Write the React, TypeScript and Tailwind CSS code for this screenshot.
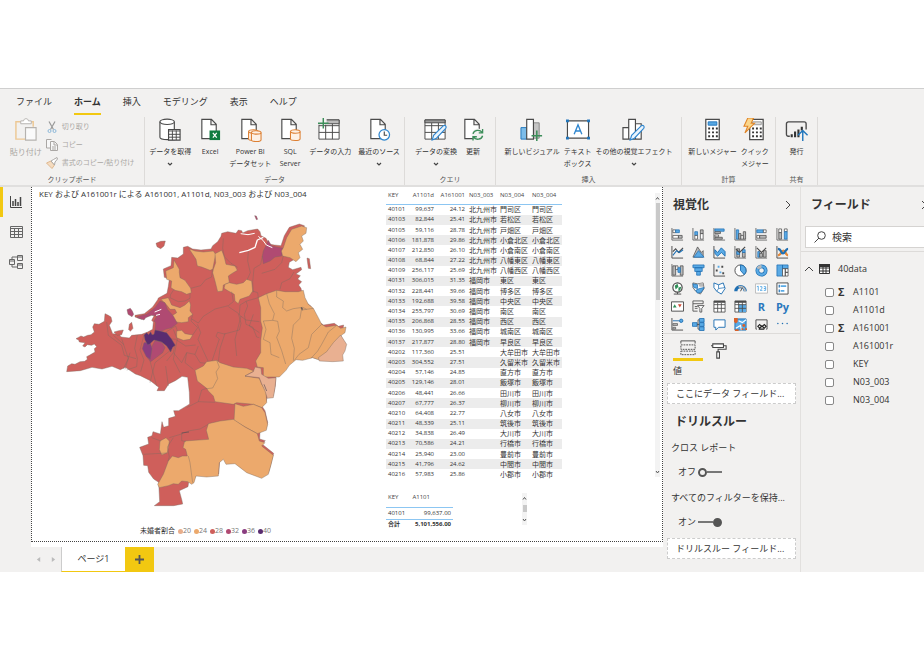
import { useState, type ReactNode } from 'react';

const MENU = ['ファイル', 'ホーム', '挿入', 'モデリング', '表示', 'ヘルプ'];

const ROWS: [string, string, string, string, string][] = [
    ['40101', '99,637', '24.12', '北九州市', '門司区'],
    ['40103', '82,844', '25.41', '北九州市', '若松区'],
    ['40105', '59,116', '28.78', '北九州市', '戸畑区'],
    ['40106', '181,878', '29.86', '北九州市', '小倉北区'],
    ['40107', '212,850', '26.10', '北九州市', '小倉南区'],
    ['40108', '68,844', '27.22', '北九州市', '八幡東区'],
    ['40109', '256,117', '25.69', '北九州市', '八幡西区'],
    ['40131', '306,015', '31.35', '福岡市', '東区'],
    ['40132', '228,441', '39.66', '福岡市', '博多区'],
    ['40133', '192,688', '39.58', '福岡市', '中央区'],
    ['40134', '255,797', '30.69', '福岡市', '南区'],
    ['40135', '206,868', '28.55', '福岡市', '西区'],
    ['40136', '130,995', '33.66', '福岡市', '城南区'],
    ['40137', '217,877', '28.80', '福岡市', '早良区'],
    ['40202', '117,360', '25.51', '', '大牟田市'],
    ['40203', '304,552', '27.51', '', '久留米市'],
    ['40204', '57,146', '24.85', '', '直方市'],
    ['40205', '129,146', '28.01', '', '飯塚市'],
    ['40206', '48,441', '26.66', '', '田川市'],
    ['40207', '67,777', '26.37', '', '柳川市'],
    ['40210', '64,408', '22.77', '', '八女市'],
    ['40211', '48,339', '25.11', '', '筑後市'],
    ['40212', '34,838', '26.49', '', '大川市'],
    ['40213', '70,586', '24.21', '', '行橋市'],
    ['40214', '25,940', '23.00', '', '豊前市'],
    ['40215', '41,796', '24.62', '', '中間市'],
    ['40216', '57,983', '25.86', '', '小郡市'],
];

const LEGEND = [
    { label: '20', color: '#e8ae8c' },
    { label: '24', color: '#eca96c' },
    { label: '28', color: '#cf5f5b' },
    { label: '32', color: '#b04a72' },
    { label: '36', color: '#8a3d80' },
    { label: '40', color: '#592c70' },
];

const FIELDS = [
    { name: 'A1101', sum: true },
    { name: 'A1101d', sum: false },
    { name: 'A161001', sum: true },
    { name: 'A161001r', sum: false },
    { name: 'KEY', sum: false },
    { name: 'N03_003', sum: false },
    { name: 'N03_004', sum: false },
];

/* ---------- ribbon icons ---------- */

const Doc = () => <path d="M4 1.5h10l5 5v15H4zM13.5 1.5v5.5H19" fill="#fff" stroke="#4a4a4a" strokeWidth="1.2" />;
const Cylinder = ({ x, y }: { x: number; y: number }) => (
    <g transform={`translate(${x} ${y})`} fill="#fdf1e6" stroke="#dd7f32" strokeWidth="1.1">
        <path d="M0 2v8c0 2 10 2 10 0V2" />
        <ellipse cx="5" cy="2" rx="5" ry="1.8" />
    </g>
);
const Pencil = () => <path d="M8.500 23l1.500-5L20 8.200c2-1.400 4 .8 2.600 2.600L13 21z" fill="#eaf4fc" stroke="#2f86cf" strokeWidth="1.2" />;
const Grid = () => <path d="M1 2h21v20H1zM1 8h21M1 15h21M8 5v17M15 5v17" fill="#fff" stroke="#4a4a4a" strokeWidth="1" />;
const Calc = () => (
    <g>
        <path d="M5 1.500h14v21H5z" fill="#fff" stroke="#4a4a4a" strokeWidth="1.3" />
        <g stroke="#333" strokeWidth="2" strokeDasharray="2 2">
            <path d="M7.500 11h10M7.500 15h10M7.500 19h10" />
        </g>
    </g>
);

const RIBBON_ICONS: Record<string, ReactNode> = {
    getData: (
        <g fill="#fff" stroke="#4a4a4a" strokeWidth="1.2">
            <path d="M2 4v16c0 2 4 2.500 8 2.500h7V4" />
            <ellipse cx="9.500" cy="4" rx="7.500" ry="2.800" />
            <path d="M11 12h12v11H11z" />
            <path d="M11 13.500h12M11 17h12M11 20h12M15 13v10M19 13v10" strokeWidth="1" />
        </g>
    ),
    excel: (
        <g>
            <Doc />
            <path d="M12 13h11v10H12z" fill="#107c41" />
            <path d="M15.500 15.500l4 5M19.500 15.500l-4 5" stroke="#fff" strokeWidth="1.300" />
        </g>
    ),
    dataset: <g><Doc /><Cylinder x={11} y={12} /><Cylinder x={14} y={13} /></g>,
    sql: <g><Doc /><Cylinder x={13} y={12} /></g>,
    enter: (
        <g>
            <Grid />
            <path d="M1 2h21v4H1z" fill="#bbb" stroke="#4a4a4a" />
            <path d="M0 0h9v7H0z" fill="#f2f1f0" />
            <path d="M5.500 0v11M0 5.500h11" stroke="#3d8e5a" strokeWidth="1.500" />
        </g>
    ),
    recent: (
        <g>
            <Doc />
            <circle cx="18" cy="17.500" r="5.500" fill="#fff" stroke="#2f86cf" strokeWidth="1.300" />
            <path d="M18 14v4h3" fill="none" stroke="#4a4a4a" strokeWidth="1.200" />
        </g>
    ),
    transform: <g><Grid /><path d="M1 2h21v3H1z" fill="#999" stroke="#4a4a4a" /><Pencil /></g>,
    refresh: (
        <g>
            <Doc />
            <circle cx="17.500" cy="17.500" r="6.500" fill="#f2f1f0" />
            <path d="M12.500 16.500c1-4 7-5 9.500-1.500M22.500 11.500V15.500h-4M22.500 18.500c-1 4-7 5-9.500 1.500M12.500 23.500V19.500h4" fill="none" stroke="#3d8e5a" strokeWidth="1.400" />
        </g>
    ),
    newVisual: (
        <g>
            <path d="M14 5h6v16h-6z" fill="#c5c5c5" stroke="#888" />
            <path d="M1 10h6v12H1z" fill="#7dbdea" stroke="#2277bd" />
            <path d="M7 1.500h7V22H7z" fill="#fff" stroke="#4a4a4a" strokeWidth="1.200" />
            <path d="M17.500 13v11M12 18.500h11" stroke="#3d8e5a" strokeWidth="1.600" />
        </g>
    ),
    textBox: (
        <g>
            <path d="M1.500 3h22v18h-22z" fill="#fff" stroke="#4a4a4a" strokeWidth="1.200" />
            <path d="M8.500 17L12.500 7l4 10M10 13.500h5" fill="none" stroke="#2f86cf" strokeWidth="1.400" />
            <path d="M0 1.500h3v3H0zM22 1.500h3v3h-3zM0 19.500h3v3H0zM22 19.500h3v3h-3z" fill="#2277bd" />
        </g>
    ),
    moreVisual: (
        <g>
            <path d="M1 10h6v12H1zM14 6h6v16h-6zM7 1.500h7V22H7z" fill="#fff" stroke="#4a4a4a" strokeWidth="1.200" />
            <Pencil />
        </g>
    ),
    measure: <g><Calc /><path d="M7.500 4h9v3.500h-9z" fill="#58a9e4" stroke="#2277bd" /></g>,
    quick: (
        <g>
            <g transform="translate(2 0)"><Calc /><path d="M8 4h9v3h-9z" fill="#ddd" stroke="#999" /></g>
            <path d="M5 0h6L8.500 5.500H12L2 15.500 5 8.500H1z" fill="#fbd68b" stroke="#e08426" strokeWidth="1.100" />
        </g>
    ),
    publish: (
        <g>
            <path d="M5 19H3.500a2 2 0 0 1-2-2V6a2 2 0 0 1 2-2H20a2 2 0 0 1 2 2v6" fill="none" stroke="#4a4a4a" strokeWidth="1.400" />
            <path d="M7 20v-3M10.500 20v-6M14 20v-8M17.500 13V9" stroke="#333" strokeWidth="2.200" />
            <path d="M18.500 24V14M13.500 18l5-5 5 5" fill="none" stroke="#2277bd" strokeWidth="1.500" />
        </g>
    ),
};

function RibbonButton({ icon, lines, arrow = false }: { icon: string; lines: string[]; arrow?: boolean }) {
    return (
        <button className="flex flex-col items-center whitespace-nowrap text-[7px] leading-3">
            <svg viewBox="0 0 25 25" className="mb-1 size-6">{RIBBON_ICONS[icon]}</svg>
            {lines.map(l => <span key={l}>{l}</span>)}
            {arrow && (
                <svg viewBox="0 0 8 12" className="h-3 w-2"><path d="M2 5l2 2 2-2" fill="none" stroke="#444" strokeWidth="1.200" /></svg>
            )}
        </button>
    );
}

function RibbonGroup({ title, className, gap = 'gap-1', children }: { title: string; className: string; gap?: string; children: ReactNode }) {
    return (
        <section className={`flex shrink-0 flex-col justify-between border-r border-[#dddbd9] pt-px ${className}`}>
            <div className={`flex items-start justify-center ${gap}`}>{children}</div>
            <h2 className="text-center text-[7px] leading-[10px] text-[#555]">{title}</h2>
        </section>
    );
}

function Clipboard() {
    return (
        <RibbonGroup title="クリップボード" className="w-[145px]">
            <button disabled className="flex flex-col items-center text-[8px] leading-3 text-[#aaa7a4]">
                <svg viewBox="0 0 25 25" className="mb-1 size-6" fill="none">
                    <path d="M7 4H2v18h10M17 4h3v5" stroke="#edc894" strokeWidth="1.500" />
                    <path d="M7 6V3h3c0-3 5-3 5 0h3v3z" fill="#fff" stroke="#b5b2af" />
                    <path d="M12 10h11v13H12z" fill="#fafafa" stroke="#b5b2af" strokeWidth="1.200" />
                </svg>
                貼り付け
            </button>
            <div className="flex flex-col text-[7px] leading-[18px] text-[#aaa7a4]">
                <button disabled className="flex items-center gap-1">
                    <svg viewBox="0 0 12 12" className="size-3" fill="none">
                        <path d="M3 .5l4.500 8M9 .5l-4.500 8" stroke="#999" strokeWidth="1.200" />
                        <circle cx="3.500" cy="10" r="1.500" stroke="#8db8d8" />
                        <circle cx="8.500" cy="10" r="1.500" stroke="#8db8d8" />
                    </svg>
                    切り取り
                </button>
                <button disabled className="flex items-center gap-1">
                    <svg viewBox="0 0 12 12" className="size-3" fill="#f7f7f7" stroke="#aaa7a4">
                        <path d="M4 9H.5V.5h5M4.500 2.500h4l3 3v6h-7zM8 3v3h3M6 8h4M6 10h4" />
                    </svg>
                    コピー
                </button>
                <button disabled className="flex items-center gap-1">
                    <svg viewBox="0 0 12 12" className="size-3">
                        <path d="M.5 6L5 4l3.500 4L6 11.500z" fill="#f5dcc0" stroke="#dfb88f" />
                        <path d="M5 4l2.500-1.500L11 .5l.5 1.500-2.500 3L8.500 8z" fill="#fff" stroke="#aaa7a4" />
                    </svg>
                    書式のコピー/貼り付け
                </button>
            </div>
        </RibbonGroup>
    );
}

/* ---------- choropleth ---------- */

const RED = '#cf5f5b';
const ORANGE = '#eca96c';
const PINK = '#e9b091';
const MAGENTA = '#b04a72';

function FukuokaMap() {
    return (
        <svg viewBox="0 0 930 930" className="ml-7 w-[310px]" stroke="#7a6a60" strokeOpacity=".6" strokeWidth="2" strokeLinejoin="round" role="img" aria-label="未婚者割合">
            <path fill={RED} d="M20 512l3-17 12-7 10 2 15-8 14-1 8-6-2-8 8-4 17-10-2-10 7-6-7-8-8 4-13-2-7 7-7-3 7-10-17-2-2-6-8-4 15-8 8 3 12-5 10-2 10-8-5-15 5-10 14 2 16-9 2-23 10 5 8 5 3 13-8 12 10 25 20 2 5 8 25 3 7-8 30-3 18-7 15-8 2-22-5-5 8-15-15-2-18 7-5 7-20-7v-5l28-5 25-20 15-22 2-5 26-14 4-21 3-22-15-5-3-25 23-10 2-25 18 2 17-12v-20l13-3 15 8 25 3 30-3 5-10 15-12 10-16 2-9 18-5 25 5 7-10 10 2 3 7 15-7 30-5 7 8 3 12 15 8 10 17 15 3 20 2 10-30 15-25 30-10 15 5-2 17-13 8 5 15-10 10 8 15-13 10 5 15-12 12-13 8-3 15 13 7 25-7 2 7-17 13 13 5-8 10 12 8-9 10 7 10 5 22 10 20 15 12 15 28 10 20 13 8 32-5 12 9 16-4-3 17-10 7 15 28-5 20-7 12 2 16-30 4-42-2-23-8-30 8-20-2-20 17-10 15-20 20-2 30-6 30-18 2-4 18-13 10 10 15 8 35-4 18-19 7-1 25 17 5-10 10 35 28-8 32-7 25-20 12-25-7-20-10-20-10-15-17-27 2-8-15-12 10-3 40-35 3-32-3-8 20-15 5-2 13-26 12 8 30 2 10-27 5h-58l16-12-3-58-15-10-15-20-3-20-12-1-2-29-10-25 27-10-3-20 13-5 3-12 22 7 5-37 5 17 15-5v-22l20-6-5-17h15l25-15 8-5-1-35-5-45-17-3-20 13-20 10-13 20h-22l5-10-25-20-30-15-15-5-30-20-15 7-25-10-30 8-30-5-35 10z" />

            {/* northern municipalities */}
            <g transform="translate(180 0)">
                <path fill={ORANGE} d="M207 143l18 7 25 3 30-3 7 10-5 25-4 20-8 3-25-10-13-3-4-20-13-20z" />
                <path fill={ORANGE} d="M285 158l20-10 7 17 6 25 27 5 7 13-17 10-10 7 3 20-18 7-2 18-15 2-8-32-7-25 2-10 7-20z" />
                <path fill={ORANGE} d="M328 245l22 5 20-5 10-10 15 5 3 30-10 15-28 10-5 13-10-8-2-20-18-10-13-8 3-12z" />
                <path fill={ORANGE} d="M162 177l16 28v10l2 15 15 8 17 24 2 13-14 5-15-8-20-4-12-8 2-20-15-5-3-25 23-10z" />
                <path fill={ORANGE} d="M123 295l22-5 10 22 25 8 15-8 13-12 4 12-2 18 8 10-13 10v12l-20 3-25-3-5-17 15-10-5-10h-15l-10-13z" />
                <path fill={ORANGE} d="M170 390l15-2 10 10 23 4-8 13-20 3-20-8z" />
                <path fill={MAGENTA} d="M445 118l10 17 15 3 20 4-5 23-20 3-15 12-20 8-3-23 3-15 10-20z" />
                <path fill={ORANGE} d="M484 150l6-10 10-30 15-25 30-10 15 5-2 17-13 8 5 15-10 10 8 15-13 10 5 15-12 12-18-12-22-5z" />
                <path fill={ORANGE} d="M415 290l25-12 30-10 25 4h40l15-4 5 22 10 20 15 12 15 28 10 20 13 8 32-5 12 9 16-4-3 17-10 7-64 76-23-8-30 8-20-2-20 17-10 15-20 20h-48v-28l-18-2-5-18 15-25v-35l5-40-5-20V320z" />
                <path fill={PINK} d="M662 402l18 28-5 20-7 12 2 18-32 2-40-2-3-10 25-18 20-27z" />
                <path fill="none" d="M440 278l8 30 15 30-5 20-28 2M430 360l8 25-8 30 20 10 3 35 25 10M458 358l15 3 5 30-8 18 15 40 12 40M470 268v20l20 12-2 20 12 10 20-7 28-4 12 6M545 322l-5 30-20 20-5 40 8 30-3 37M605 370l-30 30-10 40-28 20-14 18M650 373l-25 20-20 37-12 20-20 22M580 322l-35 5" />
                <path d="M544 318l4 4-1 6-4-6z" fill="#594a50" />
                <path fill="none" d="M162 265l-10 15-2 10 25 12 20-2 15-8v-15M212 262l30-8 15-18 18-8 2-23M310 112l-2 30 5 25 20 20 20 12M385 150l-2 30 8 35-10 22M427 165l-5 25-20 12-4 42 2 30M490 165l-5 20-20 20-40 12M480 265l5-20 25-12 12-20M398 270l15 5 2 15-35 10-20 12-2 30 20 15 40 5M335 272l5 30-15 12-40 10-35 22-15 20-20-12M378 300l5 15-10 25 5 30 20 8 12 30 8 2M325 317l30 20 8 30-5 20-45 12-20-5-5 12 10 8-10 30-20 60M315 397l-15 45-5 40M363 345l-18 70 5 50M400 340l-12 35 30 20M218 340l-5 20 20 20-15 22M232 370l10 25-8 20 30 65" />
                <path fill="none" d="M135 395l32-20 5 14M132 412l35 3 30 20 30-3M165 430l-5 25 25 30 15-30 25 5 10-25M160 455l-20 25M200 455l-5 30 25 20M225 460l15 25 20 2" />
                <path fill="none" d="M358 155l27-7 20-9 7-22 18-8" stroke="#fff" strokeOpacity="1" strokeWidth="4" />
                <path fill="none" d="M362 98l22 3 20-4M415 106l14 12 10 14 18 8" stroke="#fff" strokeOpacity="1" strokeWidth="3" />
                <path d="M404 44l5 1 4 10-4 1z" fill={MAGENTA} />
                <path d="M561 171l7 2 4 30-7-1z" fill={RED} />
            </g>

            {/* Fukuoka city wards and the bay islands */}
            <g transform="translate(-180 -45)">
                <path fill={MAGENTA} d="M480 345l15 5 7 20 18 20 12 22-17 13-18 5-17 8-15-6 2-22-5-5 8-15-15-2-18 7-5 7-20-7v-3l28-7 25-20z" />
                <path fill="none" d="M464 378l20-8M468 388l12-3" stroke="#fff" strokeOpacity="1" strokeWidth="3" />
                <path fill={MAGENTA} d="M455 482l10-18 20 4 10 17-7 15-36 27-10-12z" />
                <path fill="#8a3d80" d="M432 470l18-2 6 20-5 32-12-8-12-24z" />
                <path fill="#592c70" d="M432 447l8-7 6 6 6-9 4 9 6-1 3-13 15 3 20 5 15 20 11 18-8 6-6 14-12-18-15-12-23-6-13 12-6 2-8-14z" />
                <path fill={RED} d="M468 172l14-6 14-1-4 15-10 8-11-6z" />
                <path fill={MAGENTA} d="M381 371l10-4 6 8 4 10-5 7-12-7z" />
                <path fill={RED} d="M388 415l7-6 4 18-8 9-5-6z" />
                <path fill={RED} d="M342 438l14-4 14-2-5 14-14 2z" />
                <path fill="none" d="M320 408l5 40 40 30 8 30 35 10M412 447l-8 40 8 30-2 25-30 10M432 447l-12 45 12 30-10 35M365 458l20 60-15 30M450 525l20 75M520 430l12 30-12 60 20 40M340 448l32 28" />
            </g>

            {/* southern municipalities */}
            <g transform="translate(0 420)">
                <path fill={ORANGE} d="M405 88l25-13 10-13 30-4 10 7 40 13 40 4 22 8-27 15 43 7 7 18 13 20 2 35-15 15-25-10-50-5-10 5-55-8-5-17-15-15-5-8-28-22z" />
                <path fill={PINK} d="M555 105l25-13 5-14 18 4 2 18 20 12 23-2-3 30-5 30-18 2-7-22-10-22-7-18z" />
                <path fill={ORANGE} d="M525 188l25 8 30-6 25 10 10 15 8 35-4 18-19 7-8 3-37-20-33-20z" />
                <path fill={ORANGE} d="M445 248l35-8 40-5 35 23 37 20 6 22 17 5-10 10 35 28-8 32-7 25-20 12-45-17-35-27-27 2-8-15-12 10-3 40-35 3-32-3-6 20-7 5-12-8-18-2-10 10-15-2-15 6-27 6-5-10 17-30 15-40 12-15 18 5 12-5h15l-5-20-8-5 5-20 72-5-7-27z" />
                <path fill={ORANGE} d="M300 300l18-10 10 10-3 20-3 15-17 7-7-17z" />
                <path fill="none" d="M470 58l8 20-10 15 5 20-15 28-18 2M440 142l-15 5-10 35 50 2M415 182l-35 18M365 277l25-8 30-5 25-14M365 277v22l13 3M275 290l28 10M340 290l-18 28 6 30-4 12M250 340l70-4M385 345l5 20 8 60M328 290l40-12M195 85l15-50M270 125l15-60 50-40M325 135l-8-60" />
                <path fill="none" d="M612 130l8 20M365 276l22-3" stroke="#4f4a50" strokeWidth="3" />
            </g>
        </svg>
    );
}

/* ---------- report tables ---------- */

function Scrollbar({ className, thumb }: { className: string; thumb: string }) {
    return (
        <div className={`flex w-[5px] flex-col items-center bg-[#f3f3f3] ${className}`}>
            <svg viewBox="0 0 5 10" className="h-[10px] w-[5px]"><path d="M1 6.500l1.500-2 1.500 2" fill="none" stroke="#555" /></svg>
            <div className={`w-1 bg-[#c9c9c9] ${thumb}`} />
            <svg viewBox="0 0 5 10" className="mt-auto h-[10px] w-[5px]"><path d="M1 4l1.500 2L4 4" fill="none" stroke="#555" /></svg>
        </div>
    );
}

function DataTable() {
    return (
        <table className="h-[291px] w-[176px] table-fixed border-collapse whitespace-nowrap text-[6px] leading-[9px]">
            <colgroup>
                <col className="w-[21px]" />
                <col className="w-[29px]" />
                <col className="w-[31px]" />
                <col className="w-[31px]" />
                <col className="w-[32px]" />
                <col className="w-[32px]" />
            </colgroup>
            <thead>
                <tr className="h-[15px] border-b border-[#8cc6f2] text-left text-[#444]">
                    {['KEY', 'A1101d', 'A161001', 'N03_003', 'N03_004', 'N03_004'].map((h, i) => (
                        <th key={i} className={`pb-0.5 font-normal ${i === 1 || i === 2 ? 'pr-0.5 text-right' : 'pl-0.5'}`}>{h}</th>
                    ))}
                </tr>
            </thead>
            <tbody>
                {ROWS.map(([key, total, ratio, city, ward]) => (
                    <tr key={key} className="even:bg-[#ececec]">
                        <td className="pl-0.5">{key}</td>
                        <td className="pr-0.5 text-right">{total}</td>
                        <td className="pr-0.5 text-right">{ratio}</td>
                        <td className="pl-0.5 text-[7px]">{city}</td>
                        <td className="pl-0.5 text-[7px]">{ward}</td>
                        <td className="pl-0.5 text-[7px]">{ward}</td>
                    </tr>
                ))}
            </tbody>
        </table>
    );
}

function TotalTable() {
    return (
        <table className="w-[67px] whitespace-nowrap text-[6px] leading-[9px]">
            <thead>
                <tr className="h-[14px] border-b border-[#8cc6f2] text-left text-[#444]">
                    <th className="pb-1 pl-0.5 font-normal">KEY</th>
                    <th className="pb-1 pl-1 font-normal">A1101</th>
                </tr>
            </thead>
            <tbody>
                <tr className="h-3">
                    <td className="pl-0.5">40101</td>
                    <td className="pr-0.5 text-right">99,637.00</td>
                </tr>
            </tbody>
            <tfoot>
                <tr className="h-[11px] border-t border-[#8cc6f2] font-bold">
                    <td className="pl-0.5">合計</td>
                    <td className="pr-0.5 text-right">5,101,556.00</td>
                </tr>
            </tfoot>
        </table>
    );
}

/* ---------- visualization gallery ---------- */

const B = '#5aaae5';
const D = '#1f6fb2';
const G = '#b9b9b9';
const K = '#4a4a4a';
const Axis = () => <path d="M1 0v13h12" fill="none" stroke={K} />;

const VISUALS: { name: string; art: ReactNode }[] = [
    { name: '積み上げ横棒グラフ', art: <g stroke={K} strokeWidth=".8"><Axis /><path d="M2 2h3v3H2zM2 8h6v3H2z" fill="#fff" /><path d="M5 2h4v3H5z" fill={B} stroke={D} /><path d="M8 8h4v3H8z" fill={G} /></g> },
    { name: '積み上げ縦棒グラフ', art: <g stroke={K} strokeWidth=".8"><Axis /><path d="M3 4h3v4H3z" fill={B} stroke={D} /><path d="M3 8h3v4H3zM9 6h3v6H9z" fill="#fff" /><path d="M9 2h3v4H9z" fill={G} /></g> },
    { name: '集合横棒グラフ', art: <g strokeWidth=".8"><Axis /><path d="M2 1h10v2.500H2z" fill={B} stroke={D} /><path d="M2 4h6v2H2zM2 10h8v2H2z" fill={G} stroke={K} /><path d="M2 7.500h4v2H2z" fill="#fff" stroke={K} /></g> },
    { name: '集合縦棒グラフ', art: <g strokeWidth=".8"><Axis /><path d="M2.500 2h2.500v10H2.500z" fill={B} stroke={D} /><path d="M5 6h2.500v6H5zM10 4h2.500v8H10z" fill={G} stroke={K} /><path d="M7.500 8h2.500v4H7.500z" fill="#fff" stroke={K} /></g> },
    { name: '100% 積み上げ横棒グラフ', art: <g strokeWidth=".8"><Axis /><path d="M2 2h7v3H2z" fill={B} stroke={D} /><path d="M9 2h3v3H9zM2 8h3v3H2z" fill="#fff" stroke={K} /><path d="M5 8h7v3H5z" fill={G} stroke={K} /></g> },
    { name: '100% 積み上げ縦棒グラフ', art: <g strokeWidth=".8"><Axis /><path d="M3 1h3v4H3zM9 1h3v3H9z" fill="#fff" stroke={K} /><path d="M3 5h3v7H3z" fill={G} stroke={K} /><path d="M9 4h3v8H9z" fill={B} stroke={D} /></g> },
    { name: '折れ線グラフ', art: <g fill="none"><Axis /><path d="M2 6l3-3 3 4 5-5" stroke={K} strokeWidth="1.200" /><path d="M2 10l4-5 3 2 4-3" stroke={D} strokeWidth="1.200" /></g> },
    { name: '面グラフ', art: <g strokeWidth=".8"><path d="M1 12L6 1l4 6 2-2v7z" fill={G} stroke={K} /><path d="M2 12l5-7 6 7z" fill={B} stroke={D} /></g> },
    { name: '積み上げ面グラフ', art: <g strokeWidth="1"><Axis /><path d="M2 4l3 3 4-5 4 4v5l-4-4-4 4-3-3z" fill={B} stroke={D} /></g> },
    { name: '折れ線グラフおよび積み上げ縦棒グラフ', art: <g strokeWidth=".8"><Axis /><path d="M3 3h3v9H3zM9 7h3v5H9z" fill={G} stroke={K} /><path d="M3 6h3v3H3zM9 4h3v3H9z" fill={B} stroke={D} /><path d="M2 3l4 4 6-6" fill="none" stroke={K} strokeWidth="1.200" /></g> },
    { name: '折れ線グラフおよび集合縦棒グラフ', art: <g strokeWidth=".8"><Axis /><path d="M3 6h2v6H3z" fill={B} stroke={D} /><path d="M5 8h3v4H5zM9 5h3v7H9z" fill={G} stroke={K} /><path d="M2 2l5 5 5-5" fill="none" stroke={K} strokeWidth="1.200" /></g> },
    { name: 'リボン グラフ', art: <g fill="none"><Axis /><path d="M2 10c4 0 3-5 6-5s2 5 5 5" stroke="#e58a3a" strokeWidth="2.500" /><path d="M2 3c4 0 3 5 5.500 5S10 3 13 3" stroke={D} strokeWidth="2.500" /></g> },
    { name: 'ウォーターフォール図', art: <g strokeWidth=".8"><Axis /><path d="M2 2h3v10H2zM10 2h3v10h-3z" fill={G} stroke={K} /><path d="M5 2h2.500v4H5z" fill="#fff" stroke={K} /><path d="M7.500 4H10v5H7.500z" fill={B} stroke={D} /></g> },
    { name: 'じょうごグラフ', art: <g fill={B} stroke={D} strokeWidth=".8"><path d="M1 1h12v3H1zM3 4h8v4H3zM5 8h4v4H5z" /></g> },
    { name: '散布図', art: <g><Axis /><path d="M3 6h2v2H3zM9 2h2v2H9zM10 9h2v2h-2z" fill={K} /><path d="M5 2h2v2H5zM7 8h2v2H7z" fill={B} /></g> },
    { name: '円グラフ', art: <g><circle cx="7" cy="7" r="6" fill="#fff" stroke={K} /><path d="M7 7V1a6 6 0 0 1 4 10.500z" fill={B} stroke={D} /></g> },
    { name: 'ドーナツ グラフ', art: <g fill="none"><circle cx="7" cy="7" r="4.500" stroke={D} strokeWidth="4" /><circle cx="7" cy="7" r="4.500" stroke={B} strokeWidth="2.500" /><path d="M7 2.500a4.500 4.500 0 0 0-4 2.500" stroke={G} strokeWidth="3" /></g> },
    { name: 'ツリーマップ', art: <g stroke={D} strokeWidth=".8"><path d="M1 1h6v12H1zM7 1h6v4H7z" fill={B} /><path d="M7 5h3v8H7zM10 5h3v4h-3zM10 9h3v4h-3z" fill="#fff" stroke={K} /></g> },
    { name: 'マップ', art: <g><circle cx="7" cy="6" r="5" fill="#fff" stroke={K} strokeWidth="1.300" /><path d="M4 4l3-2 1 3-3 3zM8 6l3-1-1 4-2 1z" fill="#2f8f57" /><path d="M3 13h8M7 11v2" stroke={K} /></g> },
    { name: '塗り分け地図', art: <g strokeWidth=".8"><path d="M1 1l5 1 6-1 1 6-4 6-5-3-3-4z" fill="#fff" stroke={K} /><path d="M1 2l5 1v4L2 6zM8 7l5-1-3 5-4 1-2-3z" fill={B} stroke={D} /><path d="M7 2l5-1v4H8z" fill={G} /></g> },
    { name: '図形マップ', art: <g><path d="M1 1l5 2 5-2 2 6-4 6-5-3-3-4z" fill="#fff" stroke={D} /><path d="M6 3v4l7-1M6 7l-2 3" fill="none" stroke={D} strokeWidth=".8" /></g> },
    { name: 'ゲージ', art: <g fill="none"><path d="M2 10a5 5 0 0 1 10 0" stroke={D} strokeWidth="3.500" /><path d="M5 5.500A5 5 0 0 1 12 10" stroke={G} strokeWidth="2" /><path d="M7 10l2-4" stroke={K} /></g> },
    { name: 'カード', art: <g fill="none"><path d="M.5 2h13v10H.5z" fill="#fff" stroke={G} /><path d="M2 5l1.500-.500v5M5.500 5h2v2l-2 2h2.500M9.500 5h2v4h-2M9.500 7h2" stroke={B} /></g> },
    { name: '複数の行カード', art: <g><path d="M1 1h12v12H1z" fill="#fff" stroke={K} /><path d="M3.500 3v3M3.500 8v3" stroke={D} strokeWidth="1.300" /><path d="M5 4.500h6M5 9.500h4" stroke={B} strokeWidth="2" /></g> },
    { name: 'KPI', art: <g><path d="M.5 2h13v10H.5z" fill="#fff" stroke={K} /><path d="M2 8l2-3.500L6 8z" fill="#2f8f57" /><path d="M7.500 4.500h4L9.500 8z" fill="#cf4a35" /></g> },
    { name: 'スライサー', art: <g strokeWidth=".9"><path d="M1 1h11v3H1zM1 4v8h5M3 7h3M3 9h3" fill="none" stroke={K} /><path d="M6 6h7l-2.500 3v4h-2V9z" fill="#fff" stroke={K} /></g> },
    { name: 'テーブル', art: <g><path d="M1 1h12v12H1zM1 5h12M1 9h12M5 3v10M9 3v10" fill="#fff" stroke={K} strokeWidth=".9" /><path d="M1 1h12v2H1z" fill={K} /></g> },
    { name: 'マトリックス', art: <g strokeWidth=".9"><path d="M1 1h12v12H1z" fill="#fff" stroke={K} /><path d="M5 5h8v8H5z" fill={B} /><path d="M1 5h12M1 9h12M5 2v11M9 2v11" stroke={K} /><path d="M1 1h12v2H1z" fill={K} /></g> },
    { name: 'R', art: null },
    { name: 'Py', art: null },
    { name: '主要なインフルエンサー', art: <g><Axis /><path d="M2 3h7" stroke={D} /><circle cx="11" cy="3" r="1.800" fill={B} stroke={D} /><path d="M2 6h5v2H2zM2 10h3v2H2z" fill={G} stroke={K} strokeWidth=".7" /></g> },
    { name: '分解ツリー', art: <g fill={B} stroke={D} strokeWidth=".9"><path d="M.5 5h5v4h-5zM8 .5h5v4H8zM8 5h5v4H8zM8 9.500h5v4H8z" /><path d="M5.500 7H8M8 2H6.500v10H8" fill="none" stroke={K} /></g> },
    { name: 'Q&A', art: <path d="M1 2h12v8H6l-3 3v-3H1z" fill="#fff" stroke={D} /> },
    { name: 'ArcGIS Maps', art: <g><path d="M1 1h12v12H1z" fill={B} stroke={D} /><path d="M5 3l4 2 4-3M2 11l5-3 1 5" fill="none" stroke="#fff" strokeWidth="1.300" /><path d="M0 0h4v4L2 6 0 4z" fill="#d9622b" /><circle cx="10.500" cy="8" r="1.600" fill="#d9622b" /><path d="M8 11h2v2H8zM12 11h2v2h-2zM1 12h4v2H1z" fill="#d9622b" /></g> },
    { name: 'Power Apps', art: <g fill="none"><path d="M2 12H1V2h12v10h-1" stroke={K} /><path d="M3 9l2-2 2.500 2.500L10 7l2 2-2 2-2.500-2.500L5 11zM4 12h6" stroke="#222" strokeWidth="1.200" /></g> },
    { name: 'その他', art: <g fill={D}><circle cx="2" cy="6" r=".8" /><circle cx="7" cy="6" r=".8" /><circle cx="12" cy="6" r=".8" /></g> },
];

function Chevron() {
    return <svg viewBox="0 0 8 10" className="h-[10px] w-2 shrink-0"><path d="M2 1l4 4-4 4" fill="none" stroke="#444" /></svg>;
}

function Toggle({ label, on }: { label: string; on: boolean }) {
    const [checked, setChecked] = useState(on);
    return (
        <label className="ml-[11px] flex items-center gap-0.5 leading-4">
            {label}
            <input
                type="checkbox"
                role="switch"
                checked={checked}
                onChange={e => setChecked(e.target.checked)}
                className="flex h-[10px] w-6 appearance-none items-center before:size-[9px] before:rounded-full before:border-2 before:border-[#555] after:h-0.5 after:flex-1 after:bg-[#777] checked:flex-row-reverse checked:before:bg-[#555]"
            />
        </label>
    );
}

function VisualPane() {
    return (
        <aside className="w-[137px] shrink-0 bg-[#f2f1f0] text-[9px]">
            <div className="flex h-9 items-center justify-between pl-[10px] pr-2">
                <h2 className="text-xs font-bold">視覚化</h2>
                <Chevron />
            </div>
            <div className="grid grid-cols-6 gap-x-2 gap-y-[5px] border-b border-[#dddbd9] pb-[2px] pl-2 pr-[11px] pt-[5px]">
                {VISUALS.map(v => (
                    <button key={v.name} aria-label={v.name} className="flex size-[13px] items-center justify-center text-[11px] font-bold leading-[13px] text-[#2a78bd]">
                        {v.art ? <svg viewBox="0 0 14 14" className="size-[13px] shrink-0">{v.art}</svg> : v.name}
                    </button>
                ))}
            </div>
            <div className="flex gap-2 pl-[10px]">
                <button aria-label="フィールド" className="flex h-[27px] w-[30px] justify-center border-b-3 border-[#f2c811] pt-[6px]">
                    <svg viewBox="0 0 18 18" className="size-4" fill="none" stroke="#444">
                        <path d="M1 4V1h16v3" />
                        <path d="M1 5.500h16v5H1zM1 12.500h16v4H1z" strokeDasharray="2 1" />
                    </svg>
                </button>
                <button aria-label="書式" className="h-[27px] pt-[6px]">
                    <svg viewBox="0 0 18 18" className="size-4" fill="#fff" stroke="#444" strokeWidth="1.200">
                        <path d="M2 1h12v4H2zM14 3h3v4H8v3M6.500 10h3v7h-3z" />
                        <path d="M2 3H0" />
                    </svg>
                </button>
            </div>
            <div className="pl-[10px] pt-0.5 leading-4">値</div>
            <div className="mx-1 mt-1 truncate border border-dashed border-[#ccc] bg-white px-2 leading-[19px]">ここにデータ フィールド...</div>
            <h2 className="pl-3 pt-2 text-xs font-bold leading-5">ドリルスルー</h2>
            <div className="pl-2 pt-2 leading-4">クロス レポート</div>
            <div className="pl-1 pt-2"><Toggle label="オフ" on={false} /></div>
            <div className="whitespace-nowrap pl-2 pt-[10px] leading-4">すべてのフィルターを保持...</div>
            <div className="pl-1 pt-2"><Toggle label="オン" on={true} /></div>
            <div className="mx-1 mt-2 truncate border border-dashed border-[#ccc] bg-white px-2 leading-[19px]">ドリルスルー フィールド...</div>
        </aside>
    );
}

function FieldPane() {
    return (
        <aside className="w-[124px] shrink-0 border-l border-[#e2e0de] bg-[#f2f1f0] text-[9px]">
            <div className="flex h-9 items-center justify-between overflow-hidden pl-[10px]">
                <h2 className="text-xs font-bold">フィールド</h2>
                <span className="w-1"><Chevron /></span>
            </div>
            <div className="border-b border-[#dddbd9] pb-[3px] pl-1 pt-[3px]">
                <label className="flex h-[22px] items-center gap-1 border-y border-l border-[#d5d3d1] bg-white pl-2">
                    <svg viewBox="0 0 12 12" className="size-3 shrink-0" fill="none" stroke="#444"><circle cx="7.500" cy="4.500" r="3.800" /><path d="M5 7L.5 11.500" /></svg>
                    <input aria-label="検索" placeholder="検索" className="w-full min-w-0 pl-0.5 text-[10px] outline-none placeholder:text-[#333]" />
                </label>
            </div>
            <div className="flex items-center gap-[6px] pb-[5px] pl-1 pt-2 leading-[18px]">
                <svg viewBox="0 0 8 8" className="size-2" fill="none" stroke="#444"><path d="M0 6l4-4 4 4" /></svg>
                <svg viewBox="0 0 11 10" className="h-[10px] w-[11px]"><path d="M.5.5h10v9H.5zM.5 4h10M.5 7h10M4 1v9M7 1v9" fill="#fff" stroke="#333" /><path d="M0 0h11v3H0z" fill="#333" /></svg>
                <span className="pl-0.5">40data</span>
            </div>
            <ul>
                {FIELDS.map(f => (
                    <li key={f.name}>
                        <label className="flex items-center pl-6 leading-[18px]">
                            <input type="checkbox" className="size-[9px] appearance-none rounded-[2px] border border-[#888] bg-white checked:bg-[#f2c811]" />
                            <span className="w-[19px] pl-1 text-[11px] font-bold">{f.sum ? 'Σ' : ''}</span>
                            {f.name}
                        </label>
                    </li>
                ))}
            </ul>
        </aside>
    );
}

export default function App() {
    return (
        <div className="min-h-screen overflow-hidden bg-white pt-[88px] font-['Open_Sans','Noto_Sans_CJK_JP',sans-serif] text-[#333]">
            <header className="border-b-2 border-t border-b-[#e0dfde] border-t-[#cfcfcf] bg-[#f2f1f0]">
                <nav className="flex h-7 gap-[22px] pl-4 text-[9px]">
                    {MENU.map(m => (
                        <button key={m} className={`h-[26px] border-b-2 pt-[2px] ${m === 'ホーム' ? 'border-[#f2c811] font-bold' : 'border-transparent'}`}>{m}</button>
                    ))}
                </nav>
                <div className="flex h-[68px]">
                    <Clipboard />
                    <RibbonGroup title="データ" className="w-[260px]" gap="gap-[7px]">
                        <RibbonButton icon="getData" lines={['データを取得']} arrow />
                        <RibbonButton icon="excel" lines={['Excel']} />
                        <RibbonButton icon="dataset" lines={['Power BI', 'データセット']} />
                        <RibbonButton icon="sql" lines={['SQL', 'Server']} />
                        <RibbonButton icon="enter" lines={['データの入力']} />
                        <RibbonButton icon="recent" lines={['最近のソース']} arrow />
                    </RibbonGroup>
                    <RibbonGroup title="クエリ" className="w-[91px]">
                        <RibbonButton icon="transform" lines={['データの変換']} arrow />
                        <RibbonButton icon="refresh" lines={['更新']} />
                    </RibbonGroup>
                    <RibbonGroup title="挿入" className="w-[186px]">
                        <RibbonButton icon="newVisual" lines={['新しいビジュアル']} />
                        <RibbonButton icon="textBox" lines={['テキスト', 'ボックス']} />
                        <RibbonButton icon="moreVisual" lines={['その他の視覚エフェクト']} arrow />
                    </RibbonGroup>
                    <RibbonGroup title="計算" className="w-[94px]">
                        <RibbonButton icon="measure" lines={['新しいメジャー']} />
                        <RibbonButton icon="quick" lines={['クイック', 'メジャー']} />
                    </RibbonGroup>
                    <RibbonGroup title="共有" className="w-[42px]">
                        <RibbonButton icon="publish" lines={['発行']} />
                    </RibbonGroup>
                </div>
            </header>

            <div className="flex">
                <nav className="flex w-[31px] shrink-0 flex-col bg-[#f2f1f0]">
                    <button aria-label="レポート" className="flex h-[30px] items-center border-l-3 border-[#f2c811] pl-[7px]">
                        <svg viewBox="0 0 12 12" className="size-3" fill="none" stroke="#444"><path d="M.5 0v11.500H12" /><path d="M3 5v5M5.500 3v7M8 6v4M10.500 1v9" strokeWidth="1.500" /></svg>
                    </button>
                    <button aria-label="データ" className="flex h-[30px] items-center pl-[10px]">
                        <svg viewBox="0 0 13 12" className="h-3 w-[13px]" fill="none" stroke="#666"><path d="M.5.5h12v11H.5zM.5 2.500h12M.5 5.500h12M.5 8.500h12M4.500 2v10M8.500 2v10" /></svg>
                    </button>
                    <button aria-label="モデル" className="flex h-[30px] items-center pl-[9px]">
                        <svg viewBox="0 0 14 14" className="size-[14px]" fill="none" stroke="#666"><path d="M.5 4.500h5v5h-5zM.5 6h5M8.500.5h5v5h-5zM8.500 2h5M8.500 8.500h5v5h-5zM8.500 10h5M3 4.500V2h5M3 9.500V12h5" /></svg>
                    </button>
                </nav>

                <main className="flex min-w-0 flex-1 flex-col">
                    <div className="flex flex-1 border-b border-l border-r border-dotted border-[#444] bg-white">
                        <section className="min-w-0 flex-1">
                            <h1 className="whitespace-nowrap pl-[7px] text-[8px] leading-[14px]">KEY および A161001r による A161001, A1101d, N03_003 および N03_004</h1>
                            <FukuokaMap />
                            <ul className="flex items-center gap-[3px] pb-1 pl-[108px] pt-[14px] text-[7px] leading-3 text-[#777]">
                                <li className="text-[#333]">未婚者割合</li>
                                {LEGEND.map(l => (
                                    <li key={l.label} className="flex items-center">
                                        <svg viewBox="0 0 6 6" className="size-[5px]"><circle cx="3" cy="3" r="3" fill={l.color} /></svg>
                                        {l.label}
                                    </li>
                                ))}
                            </ul>
                        </section>
                        <section className="w-[276px] shrink-0 pt-0.5">
                            <div className="flex justify-between pr-[2px]">
                                <DataTable />
                                <Scrollbar className="mt-1 h-[284px]" thumb="h-[97px]" />
                            </div>
                            <div className="flex pt-[13px]">
                                <TotalTable />
                                <Scrollbar className="ml-[69px] h-8" thumb="my-[2px] h-[7px]" />
                            </div>
                        </section>
                    </div>
                    <footer className="mt-[5px] flex h-[25px] items-stretch bg-[#f2f1f0] text-[9px]">
                        <button aria-label="前のページ" className="w-[15px]"><svg viewBox="0 0 6 6" className="mx-auto size-[5px]"><path d="M5 0v6L1 3z" fill="#bbb" /></svg></button>
                        <button aria-label="次のページ" className="w-[15px]"><svg viewBox="0 0 6 6" className="mx-auto size-[5px]"><path d="M1 0v6l4-3z" fill="#bbb" /></svg></button>
                        <button className="w-16 border-b border-l border-b-[#f2c811] border-l-[#ccc] bg-white">ページ1</button>
                        <button aria-label="新しいページ" className="w-[29px] bg-[#f2c811]">
                            <svg viewBox="0 0 10 10" className="mx-auto size-[9px]"><path d="M5 0v10M0 5h10" stroke="#555" strokeWidth="2" /></svg>
                        </button>
                    </footer>
                </main>

                <VisualPane />
                <FieldPane />
            </div>
        </div>
    );
}
